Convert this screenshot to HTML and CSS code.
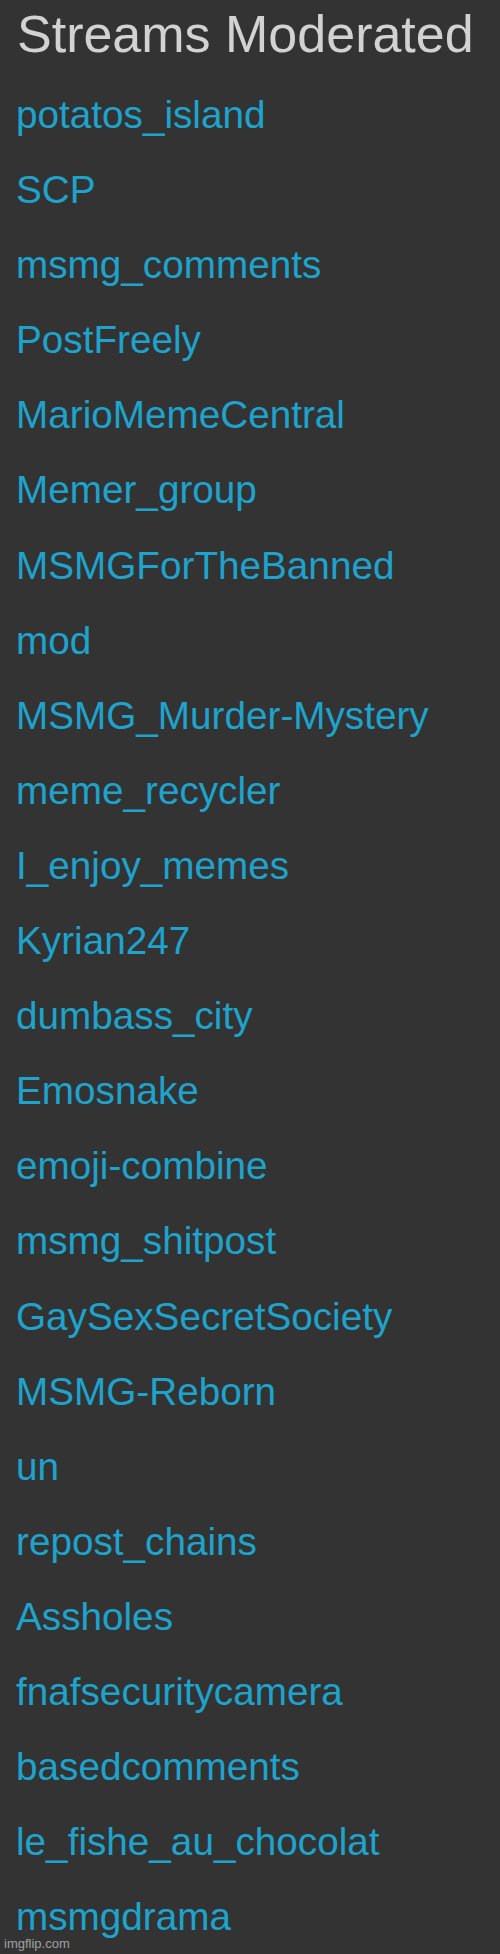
FILE: index.html
```html
<!DOCTYPE html>
<html lang="en">
<head>
<meta charset="utf-8">
<title>Streams Moderated</title>
<link rel="stylesheet" href="styles.css">
</head>
<body>
<div class="page">
  <h1 class="title">Streams Moderated</h1>
  <ul class="streams">
    <li><a href="#">potatos_island</a></li>
    <li><a href="#">SCP</a></li>
    <li><a href="#">msmg_comments</a></li>
    <li><a href="#">PostFreely</a></li>
    <li><a href="#">MarioMemeCentral</a></li>
    <li><a href="#">Memer_group</a></li>
    <li><a href="#">MSMGForTheBanned</a></li>
    <li><a href="#">mod</a></li>
    <li><a href="#">MSMG_Murder-Mystery</a></li>
    <li><a href="#">meme_recycler</a></li>
    <li><a href="#">I_enjoy_memes</a></li>
    <li><a href="#">Kyrian247</a></li>
    <li><a href="#">dumbass_city</a></li>
    <li><a href="#">Emosnake</a></li>
    <li><a href="#">emoji-combine</a></li>
    <li><a href="#">msmg_shitpost</a></li>
    <li><a href="#">GaySexSecretSociety</a></li>
    <li><a href="#">MSMG-Reborn</a></li>
    <li><a href="#">un</a></li>
    <li><a href="#">repost_chains</a></li>
    <li><a href="#">Assholes</a></li>
    <li><a href="#">fnafsecuritycamera</a></li>
    <li><a href="#">basedcomments</a></li>
    <li><a href="#">le_fishe_au_chocolat</a></li>
    <li><a href="#">msmgdrama</a></li>
  </ul>
  <div class="watermark">imgflip.com</div>
</div>
</body>
</html>
```
FILE: styles.css
```css
html, body {
  margin: 0;
  padding: 0;
  background: #333333;
}
.page {
  position: relative;
  width: 500px;
  height: 1954px;
  background: #333333;
  font-family: "Liberation Sans", Arial, sans-serif;
  overflow: hidden;
}
.title {
  margin: 5px 0 0 0;
  padding-left: 17px;
  font-size: 52px;
  line-height: 58px;
  font-weight: normal;
  color: #d2d2d2;
  white-space: nowrap;
}
.streams {
  list-style: none;
  margin: 14px 0 0 0;
  padding: 0 0 0 16px;
}
.streams li {
  font-size: 38.7px;
  line-height: 75.1px;
  white-space: nowrap;
}
.streams a {
  color: #1ea3cd;
  text-decoration: none;
}
.watermark {
  position: absolute;
  left: 4px;
  bottom: 3px;
  font-size: 13px;
  line-height: 15px;
  color: rgba(255, 255, 255, 0.55);
}
```
